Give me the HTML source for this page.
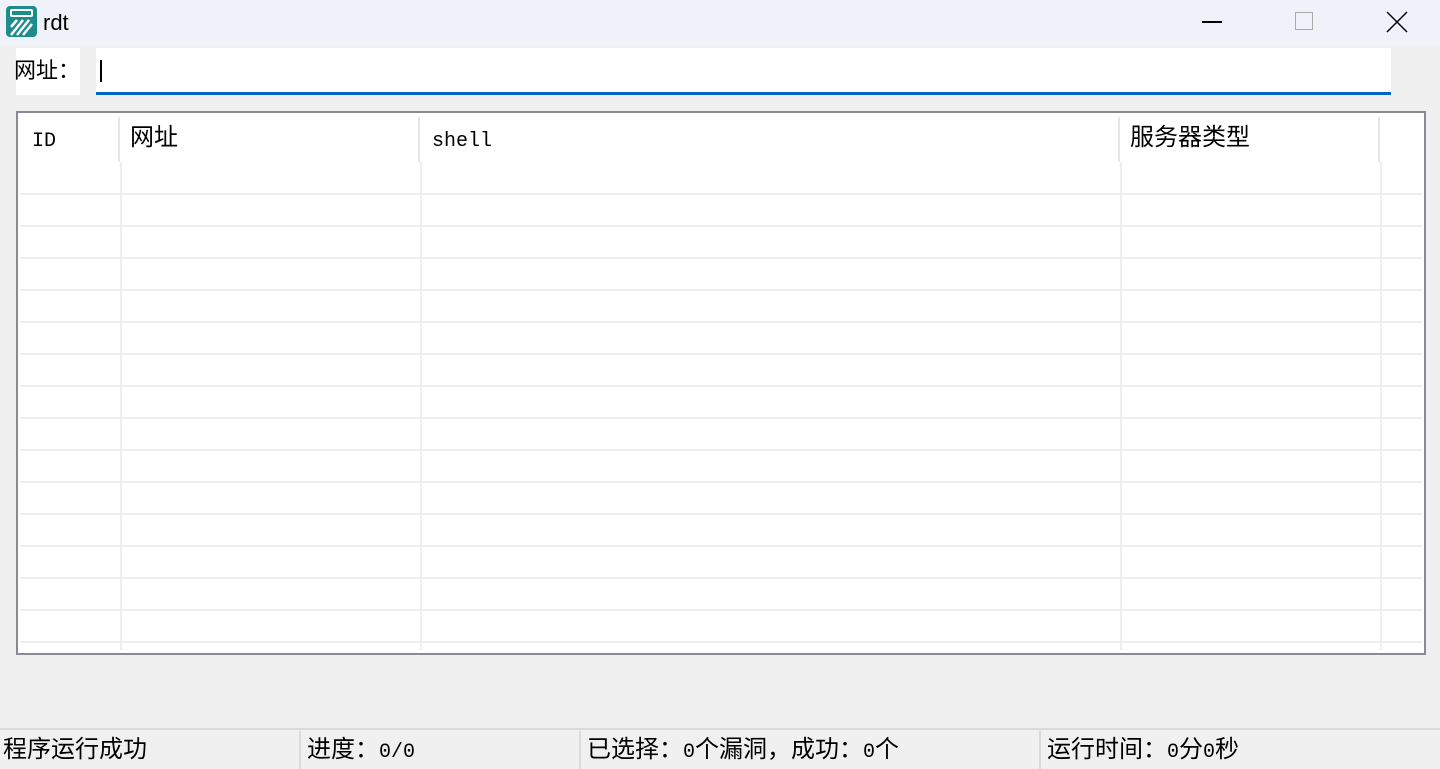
<!DOCTYPE html><html><head><meta charset="utf-8"><style>
*{margin:0;padding:0;box-sizing:border-box}
body{width:1440px;height:769px;background:#f0f0f0;position:relative;overflow:hidden;font-family:"Liberation Sans","Noto Sans CJK SC",sans-serif;color:#000}
.a{position:absolute}
.t{font-family:"Liberation Mono","WenQuanYi Zen Hei",monospace;font-size:24px;line-height:26px;white-space:nowrap}
.t i{font-style:normal;font-size:20px}
</style></head><body>
<div class="a" style="left:0;top:0;width:1440px;height:46px;background:#eff3f9"></div>
<svg class="a" style="left:5px;top:5px" width="33" height="33" viewBox="0 0 33 33"><rect x="1" y="1" width="31" height="31" rx="4" fill="#1f8c8c"/><rect x="6" y="5" width="21" height="6" rx="1" fill="none" stroke="#fff" stroke-width="2"/><path d="M6 30 L18 15 M12 30 L24 15 M18 30 L27 19 M6 22 L12 15" stroke="#fff" stroke-width="2.5"/></svg>
<div class="a" style="left:43px;top:10px;font-size:22px">rdt</div>
<div class="a" style="left:1202px;top:21px;width:20px;height:1.5px;background:#000"></div>
<div class="a" style="left:1295px;top:12px;width:18px;height:18px;border:1px solid #aaa"></div>
<svg class="a" style="left:1386px;top:11px" width="22" height="22"><path d="M1 1L21 21M21 1L1 21" stroke="#000" stroke-width="1.5"/></svg>
<div class="a" style="left:16px;top:48px;width:64px;height:47px;background:#fff"></div>
<div class="a t" style="left:14px;top:60px;font-size:22px">网址：</div>
<div class="a" style="left:96px;top:48px;width:1295px;height:47px;background:#fff;border-bottom:3px solid #0067c0"></div>
<div class="a" style="left:100px;top:60px;width:2px;height:22px;background:#000"></div>
<div class="a" style="left:16px;top:111px;width:1410px;height:544px;background:#fff;border:2px solid #8a8a94"></div>
<div class="a" id="g" style="left:18px;top:113px;width:1406px;height:540px"></div>
<div class="a t" style="left:32px;top:128px"><i>ID</i></div>
<div class="a t" style="left:130px;top:127px">网址</div>
<div class="a t" style="left:432px;top:128px"><i>shell</i></div>
<div class="a t" style="left:1130px;top:127px">服务器类型</div>
<div class="a" style="left:0;top:728px;width:1440px;height:41px;border-top:2px solid #dadada;background:#f0f0f0"></div>
<div class="a t" style="left:3px;top:739px">程序运行成功</div>
<div class="a t" style="left:307px;top:739px">进度：<i>0/0</i></div>
<div class="a t" style="left:587px;top:739px">已选择：<i>0</i>个漏洞，成功：<i>0</i>个</div>
<div class="a t" style="left:1047px;top:739px">运行时间：<i>0</i>分<i>0</i>秒</div>
<div class="a" style="left:299px;top:731px;width:2px;height:38px;background:#dadada"></div>
<div class="a" style="left:579px;top:731px;width:2px;height:38px;background:#dadada"></div>
<div class="a" style="left:1039px;top:731px;width:2px;height:38px;background:#dadada"></div>
<script>
var g=document.getElementById('g'),h='';
[118,418,1118,1378].forEach(function(x){h+='<div class="a" style="left:'+(x-18)+'px;top:4px;width:2px;height:45px;background:#e6e6e6"></div>';});
[120,420,1120,1380].forEach(function(x){h+='<div class="a" style="left:'+(x-18)+'px;top:49px;width:2px;height:488px;background:#eeeeee"></div>';});
for(var y=193;y<=641;y+=32)h+='<div class="a" style="left:2px;top:'+(y-113)+'px;width:1402px;height:2px;background:#eeeeee"></div>';
g.innerHTML=h;
</script>
</body></html>
